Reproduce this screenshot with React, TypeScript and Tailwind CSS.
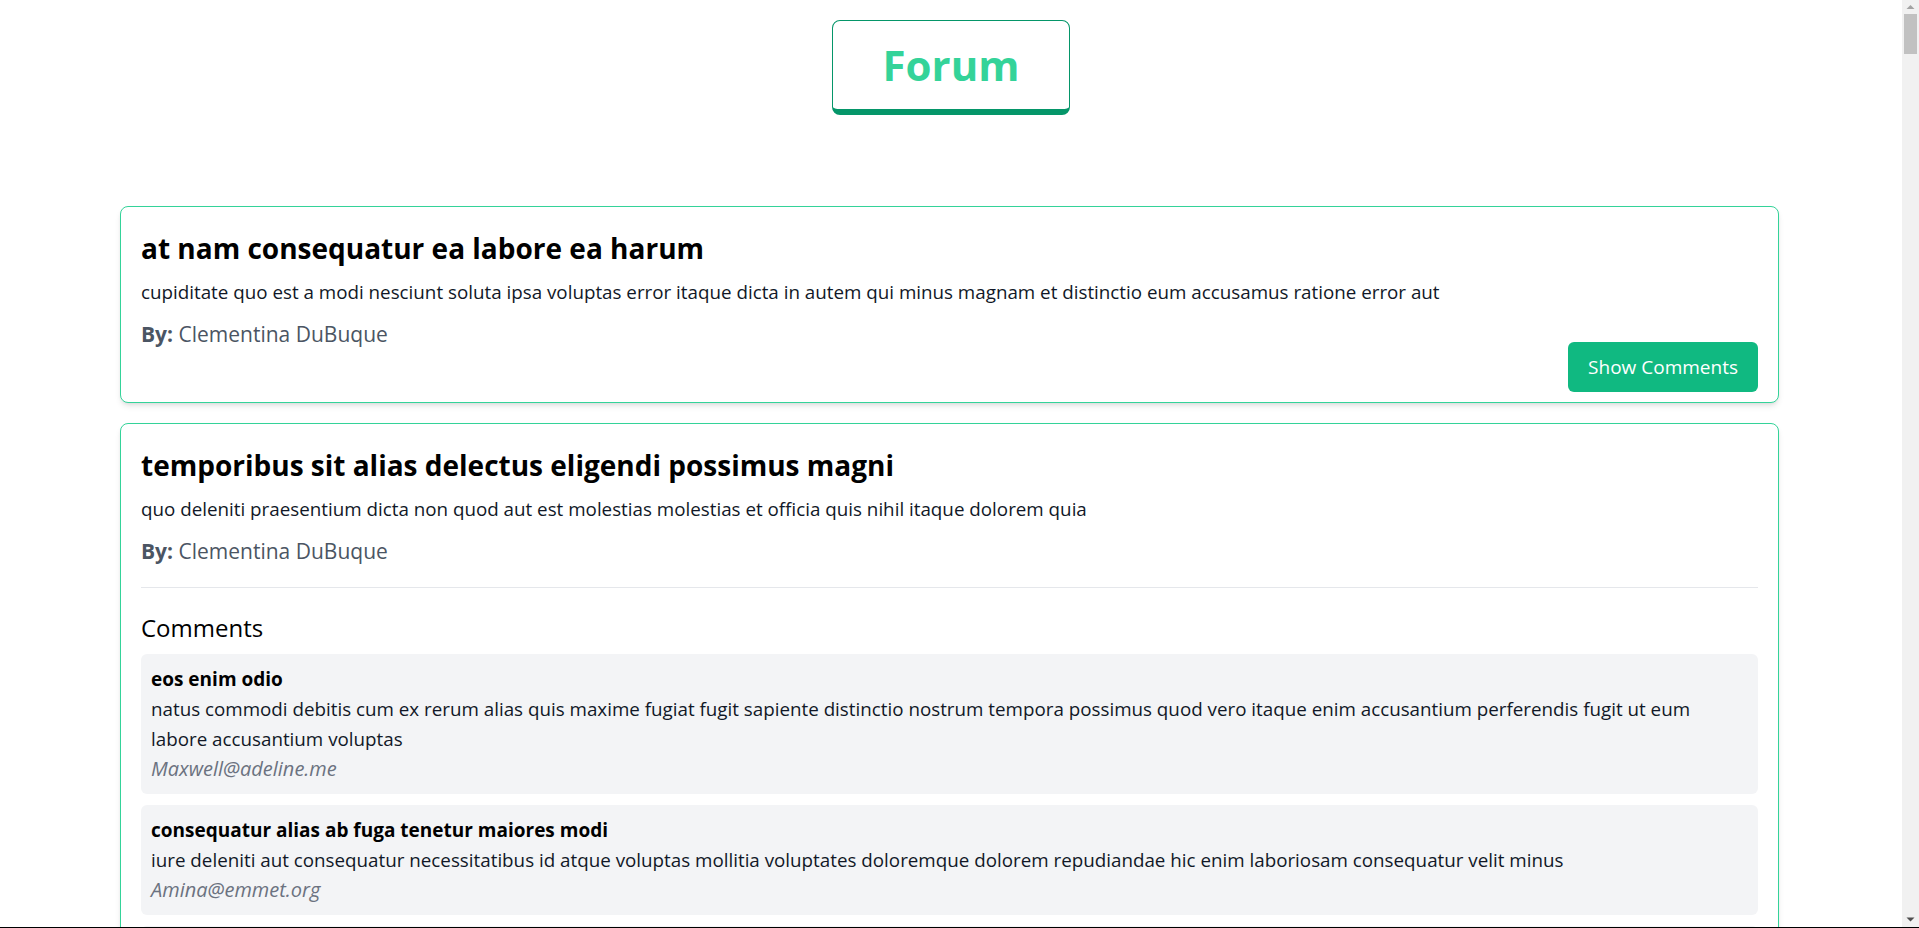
import React, { useState } from 'react'

interface Comment {
  name: string
  body: string
  email: string
}

interface Post {
  id: number
  title: string
  body: string
  author: string
  comments: Comment[]
}

const posts: Post[] = [
  {
    id: 13,
    title: 'at nam consequatur ea labore ea harum',
    body: 'cupiditate quo est a modi nesciunt soluta ipsa voluptas error itaque dicta in autem qui minus magnam et distinctio eum accusamus ratione error aut',
    author: 'Clementina DuBuque',
    comments: [],
  },
  {
    id: 14,
    title: 'temporibus sit alias delectus eligendi possimus magni',
    body: 'quo deleniti praesentium dicta non quod aut est molestias molestias et officia quis nihil itaque dolorem quia',
    author: 'Clementina DuBuque',
    comments: [
      {
        name: 'eos enim odio',
        body: 'natus commodi debitis cum ex rerum alias quis maxime fugiat fugit sapiente distinctio nostrum tempora possimus quod vero itaque enim accusantium perferendis fugit ut eum labore accusantium voluptas',
        email: 'Maxwell@adeline.me',
      },
      {
        name: 'consequatur alias ab fuga tenetur maiores modi',
        body: 'iure deleniti aut consequatur necessitatibus id atque voluptas mollitia voluptates doloremque dolorem repudiandae hic enim laboriosam consequatur velit minus',
        email: 'Amina@emmet.org',
      },
      {
        name: 'ut praesentium sit eos rerum tempora',
        body: 'est eos doloremque autem similique sint fuga atque voluptate est minus tempore quia asperiores aliquam et corporis voluptatem consequatur et eum illo aut qui molestiae et amet',
        email: 'Gilda@jacques.org',
      },
      {
        name: 'molestias facere soluta mollitia totam dolorem commodi itaque',
        body: 'est illum quia alias ipsam minus ut quod vero aut laudantium est et ut culpa molestias',
        email: 'Kadin@walter.io',
      },
      {
        name: 'dolor ut ut aut molestiae esse et tempora numquam',
        body: 'pariatur occaecati ea autem at quis et dolorem similique quam aut quia nobis modi exercitationem quia et sapiente dolorem',
        email: 'Alice_Considine@daren.com',
      },
    ],
  },
  {
    id: 15,
    title: 'eveniet quod temporibus',
    body: 'reprehenderit quos placeat velit minima officia dolores impedit repudiandae molestiae nam voluptas recusandae quis delectus officiis harum fugiat vitae',
    author: 'Clementina DuBuque',
    comments: [],
  },
  {
    id: 16,
    title: 'sint suscipit perspiciatis velit dolorum rerum ipsa laboriosam odio',
    body: 'suscipit nam nisi quo aperiam aut asperiores eos fugit maiores voluptatibus quia voluptatem quis ullam qui in alias quia est consequatur magni mollitia accusamus ea nisi voluptate dicta',
    author: 'Clementina DuBuque',
    comments: [],
  },
  {
    id: 17,
    title: 'fugit voluptas sed molestias voluptatem provident',
    body: 'eos voluptas et aut odit natus earum aspernatur fuga molestiae ullam deserunt ratione qui eos qui nihil ratione nemo velit ut aut id quo',
    author: 'Clementina DuBuque',
    comments: [],
  },
]

const PostCard: React.FC<{ post: Post; open: boolean; onToggle: () => void }> = ({ post, open, onToggle }) => (
  <div className="rounded-lg border border-[#34d399] bg-white px-5 pt-[23px] pb-[10px] shadow-md">
    <h2 className="text-[28px] leading-[36px] font-bold text-black">{post.title}</h2>
    <p className="mt-[12px] text-[18.8px] leading-[28px] text-[#111827]">{post.body}</p>
    <p className="mt-[14px] text-[21px] leading-[28px] text-[#4b5563]">
      <span className="font-bold">By:</span> {post.author}
    </p>
    {open ? (
      <div className="mt-[22px] border-t border-[#e5e7eb] pt-[26px] pb-[10px]">
        <h3 className="text-[24px] leading-[28px] text-black">Comments</h3>
        <div className="mt-[12px] flex flex-col gap-[11px]">
          {post.comments.map(c => (
            <div key={c.email} className="rounded-md bg-[#f3f4f6] px-[10px] pt-[10px] pb-[10px]">
              <div className="text-[19px] leading-[30px] font-bold text-black">{c.name}</div>
              <div className="text-[18.8px] leading-[30px] text-[#111827]">{c.body}</div>
              <div className="text-[20px] leading-[30px] italic text-[#6b7280]">{c.email}</div>
            </div>
          ))}
        </div>
      </div>
    ) : (
      <div className="mt-[-6px] flex justify-end">
        <button
          onClick={onToggle}
          className="h-[50px] rounded-md bg-[#10b981] px-5 text-[19px] text-white"
        >
          Show Comments
        </button>
      </div>
    )}
  </div>
)

// classic browser scrollbar, as seen in the screenshot
const ScrollTrack: React.FC = () => (
  <div className="flex w-[17px] shrink-0 flex-col items-center bg-[#f1f1f1]">
    <svg width="17" height="14" viewBox="0 0 17 14" className="shrink-0">
      <path d="M4.5 9 L8.5 5 L12.5 9 Z" fill="#a3a3a3" />
    </svg>
    <div className="h-[40px] w-[13px] shrink-0 bg-[#c1c1c1]" />
    <div className="flex-1" />
    <svg width="17" height="15" viewBox="0 0 17 15" className="shrink-0">
      <path d="M4.5 5.5 L12.5 5.5 L8.5 9.5 Z" fill="#505050" />
    </svg>
  </div>
)

export default function App() {
  const [openId, setOpenId] = useState<number | null>(14)

  return (
    <div className="flex h-screen flex-col bg-white font-['Open_Sans',sans-serif]">
      <div className="flex min-h-0 flex-1">
        <div className="min-w-0 flex-1 overflow-y-auto">
          <header className="flex justify-center pt-5">
            <div className="flex h-[95px] w-[238px] items-center justify-center rounded-lg border border-b-[6px] border-[#059669] bg-white">
              <h1 className="text-[42px] leading-none font-bold text-[#34d399]">Forum</h1>
            </div>
          </header>
          <main className="mt-[91px] flex flex-col gap-5 pr-[123px] pl-[120px] pb-10">
            {posts.map(p => (
              <PostCard key={p.id} post={p} open={openId === p.id} onToggle={() => setOpenId(p.id)} />
            ))}
          </main>
        </div>
        <ScrollTrack />
      </div>
      <div className="h-px shrink-0 bg-black" />
    </div>
  )
}
